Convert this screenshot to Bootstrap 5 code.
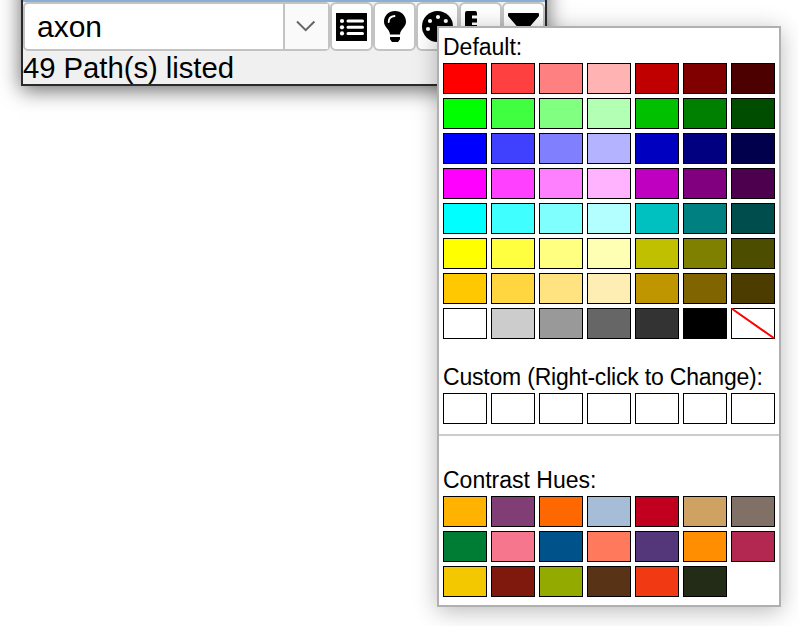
<!DOCTYPE html>
<html lang="en">
<head>
<meta charset="utf-8">
<title>Path palette</title>
<link href="https://cdn.jsdelivr.net/npm/bootstrap@5.3.0/dist/css/bootstrap.min.css" rel="stylesheet">
<style>
body{width:798px;height:626px;background:#fff;color:#000;font-family:"Liberation Sans",Arial,sans-serif}
.path-window{width:526px;height:186px;margin:-100px 0 0 21px;background:#f0f0f0;border:2px solid #2a2a2a;box-shadow:0 4px 20px rgba(0,0,0,.6)}
.title-strip{height:100px;background:#8aaed6}
.tool-row{height:49px}
.combo{width:307px;border:2px solid #c3c3c3;border-radius:5px;background:#fff;font-size:30px}
.combo-text{line-height:46px;padding-left:12px}
.combo-arrow{width:45px;border-left:2px solid #c3c3c3;background:#fafafa}
.tool-btn{width:43px;padding:0;border:2px solid #c3c3c3;border-radius:6px;background:#fff}
.tool-btn svg,.combo-arrow svg{display:block}
.status-text{font-size:29.33px;letter-spacing:-.06px;line-height:33px;height:33px}
.palette-menu{left:437px;top:26px;width:344px;height:581px;background:#fff;border:2px solid #b0b0b0;box-shadow:0 4px 22px rgba(0,0,0,.28);font-size:23px}
.group-label{line-height:27px;height:27px;white-space:nowrap}
.custom-group .group-label{letter-spacing:-.2px}
.swatch-grid{display:grid;grid-template-columns:repeat(7,44px);grid-auto-rows:31px;gap:4px;margin-top:2px}
.swatch{border:1px solid #000;background:#fff}
.swatch svg{display:block;margin:-1px}
.menu-line{height:2px;background:#ccc}
.first-group{padding:6px 4px 0;height:336px}
.custom-group{padding:0 4px;height:70px}
.hue-group{padding:31px 4px 0}
</style>
<script src="https://cdn.jsdelivr.net/npm/bootstrap@5.3.0/dist/js/bootstrap.bundle.min.js"></script>
</head>
<body class="position-relative overflow-hidden m-0">
<div class="overflow-hidden h-100">
<main class="path-window">
  <div class="title-strip"></div>
  <div class="tool-row d-flex">
    <div class="combo d-flex flex-shrink-0">
      <div class="combo-text flex-grow-1">axon</div>
      <div class="combo-arrow"><svg width="43" height="45" viewBox="285 4 43 45"><path d="M297 21.5l8.7 8.7 8.7-8.7" fill="none" stroke="#666" stroke-width="2"/></svg></div>
    </div>
    <button class="tool-btn" aria-label="List"><svg width="39" height="45" viewBox="332 4 39 45"><path d="M336 13h31v28h-31z"/><g fill="#fff"><circle cx="342" cy="21" r="2.1"/><circle cx="342" cy="27.3" r="2.1"/><circle cx="342" cy="33.4" r="2.1"/></g><path d="M348 21h14.5M348 27.3h14.5M348 33.4h14.5" stroke="#fff" stroke-width="3" stroke-linecap="round"/></svg></button>
    <button class="tool-btn" aria-label="Hint"><svg width="39" height="45" viewBox="375 4 39 45"><path d="M395 11c-6.300 0-11 4.700-11 10.800 0 5.700 5.700 7.200 6 12.700h10c.3-5.500 6-7 6-12.700 0-6.100-4.700-10.800-11-10.800zM390 37h10v2.300l-2 2.700h-6l-2-2.700z"/><path d="M388.700 22c0-3.500 2.500-5.700 5.800-6" fill="none" stroke="#fff" stroke-width="1.800" stroke-linecap="round"/></svg></button>
    <button class="tool-btn" aria-label="Colors"><svg width="39" height="45" viewBox="418 4 39 45"><circle cx="437.500" cy="26.500" r="15.500"/><g fill="#fff"><circle cx="430" cy="21" r="2.1"/><circle cx="438" cy="17" r="2.1"/><circle cx="445.800" cy="21" r="2.1"/><circle cx="428" cy="29" r="2.1"/></g></svg></button>
    <button class="tool-btn" aria-label="Measure"><svg width="39" height="45" viewBox="461 4 39 45"><path d="M467 11h8q2 0 2 2v2.500h-5v3h5v4h-5v2.500h5v16h-12V13q0-2 2-2z"/></svg></button>
    <button class="tool-btn" aria-label="Filter"><svg width="39" height="45" viewBox="504 4 39 45"><path d="M509 13h29q1 0 1 1v2L526 31v10h-5V31l-13-15v-2q0-1 1-1z"/></svg></button>
  </div>
  <div class="status-text">49 Path(s) listed</div>
</main>
</div>
<section class="palette-menu position-absolute">
  <div class="first-group"><div class="group-label">Default:</div><div class="swatch-grid" data-colors="ff0000 ff4040 ff8080 ffb3b3 c00000 800000 4d0000 00ff00 40ff40 80ff80 b3ffb3 00c000 008000 004d00 0000ff 4040ff 8080ff b3b3ff 0000c0 000080 00004d ff00ff ff40ff ff80ff ffb3ff c000c0 800080 4d004d 00ffff 40ffff 80ffff b3ffff 00c0c0 008080 004d4d ffff00 ffff40 ffff80 ffffb3 c0c000 808000 4d4d00 ffc800 ffd640 ffe380 ffeeb3 c09600 806400 4d3c00 ffffff cccccc 999999 666666 333333 000000 none"></div></div>
  <div class="custom-group"><div class="group-label">Custom (Right-click to Change):</div><div class="swatch-grid" data-colors="ffffff ffffff ffffff ffffff ffffff ffffff ffffff"></div></div>
  <div class="menu-line"></div>
  <div class="hue-group"><div class="group-label">Contrast Hues:</div><div class="swatch-grid" data-colors="ffb300 803e75 ff6800 a6bdd7 c10020 cea262 817066 007d34 f6768e 00538a ff7a5c 53377a ff8e00 b32851 f4c800 7f180d 93aa00 593315 f13a13 232c16"></div></div>
</section>
<script>
document.querySelectorAll('.swatch-grid').forEach(grid => {
  grid.dataset.colors.split(' ').forEach(color => {
    const cell = document.createElement('div');
    cell.className = 'swatch';
    if (color === 'none') cell.innerHTML = '<svg width="44" height="31" viewBox="0 0 44 31"><path d="M0.500 0.500L43.500 30.500" stroke="#f00" stroke-width="2"/></svg>';
    else cell.style.backgroundColor = '#' + color;
    grid.append(cell);
  });
});
</script>
</body>
</html>
